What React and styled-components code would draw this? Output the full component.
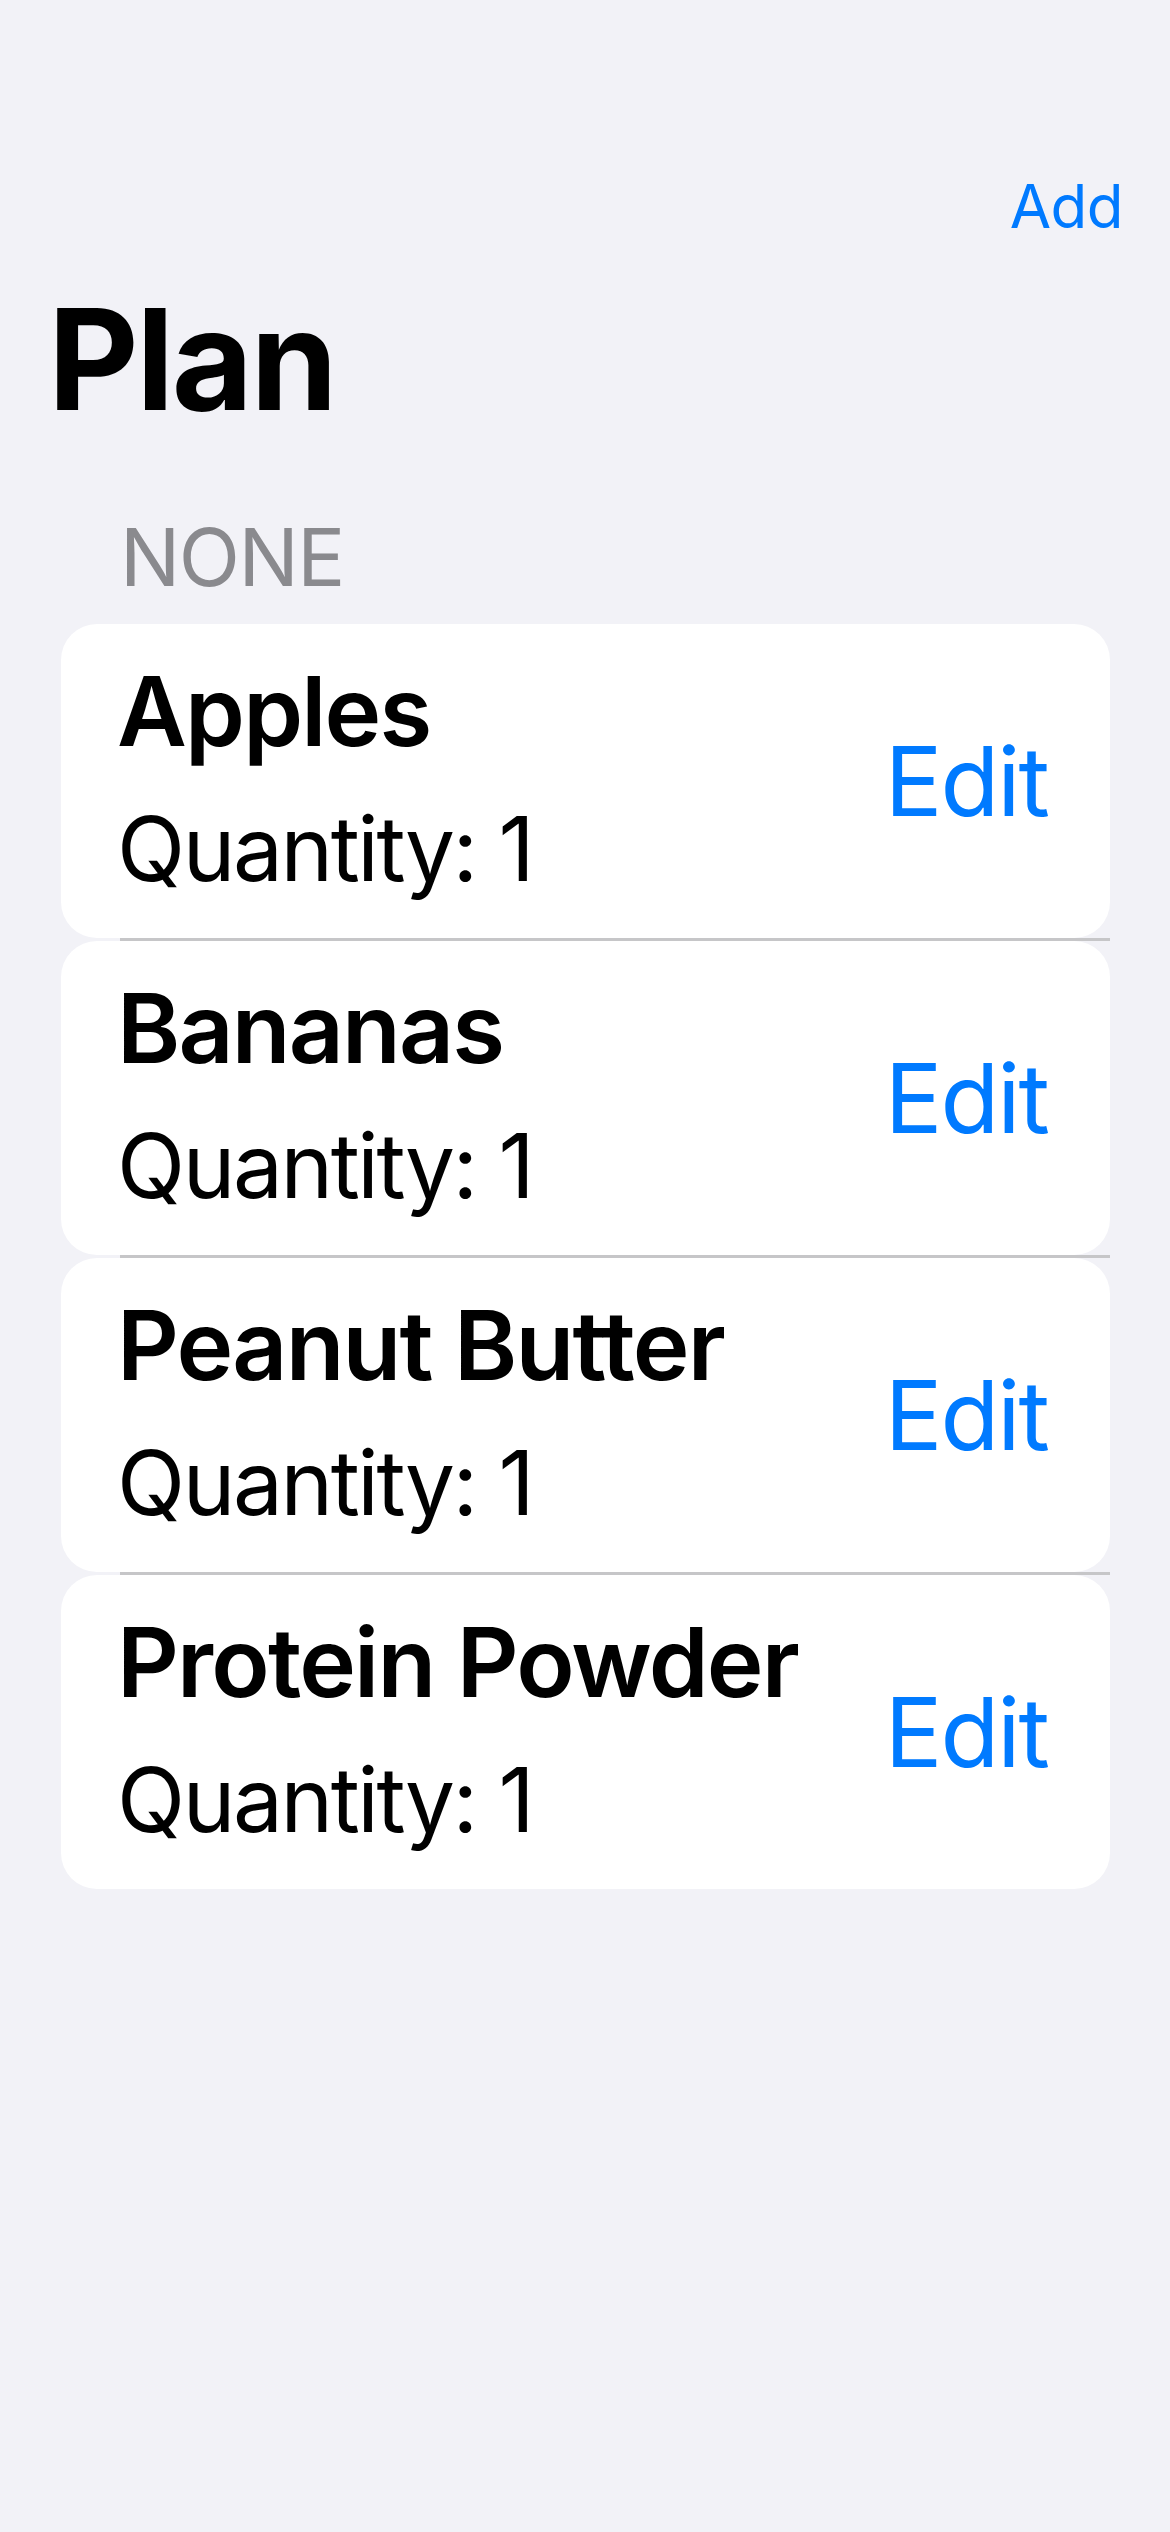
import styled, { createGlobalStyle } from "styled-components";

const GlobalStyle = createGlobalStyle`
  html, body {
    margin: 0;
    padding: 0;
    background: #f2f2f7;
  }

  body {
    font-family: Inter, "Noto Sans", "Liberation Sans", sans-serif;
    -webkit-font-smoothing: antialiased;
  }
`;

const Screen = styled.div`
  min-height: 2532px;
  width: 1170px;
  background: #f2f2f7;
  display: flex;
  flex-direction: column;
`;

const NavBar = styled.div`
  display: flex;
  justify-content: flex-end;
  padding: 176px 47px 0 0;
`;

const NavButton = styled.button`
  border: none;
  background: none;
  padding: 0;
  font-family: inherit;
  font-size: 60px;
  line-height: 60px;
  letter-spacing: -0.5px;
  color: #007aff;
  cursor: pointer;
`;

const LargeTitle = styled.h1`
  margin: 53px 0 0;
  padding-left: 48px;
  font-size: 140px;
  line-height: 140px;
  font-weight: 700;
  letter-spacing: -2.5px;
  color: #000;
`;

const SectionHeader = styled.div`
  margin-top: 88px;
  padding-left: 120px;
  font-size: 80px;
  line-height: 80px;
  letter-spacing: -1.5px;
  color: #8a8a8e;
`;

const List = styled.div`
  margin: 27px 60px 0 61px;
  display: flex;
  flex-direction: column;
`;

const Row = styled.div`
  height: 314px;
  box-sizing: border-box;
  background: #fff;
  border-radius: 36px;
  display: flex;
  align-items: center;
  justify-content: space-between;
  padding: 0 62px 0 56px;
`;

const RowText = styled.div`
  display: flex;
  flex-direction: column;
  gap: 45px;
  padding-bottom: 6px;
`;

const ItemName = styled.div`
  font-size: 96px;
  line-height: 96px;
  font-weight: 600;
  letter-spacing: -1.8px;
  color: #000;
`;

const ItemDetail = styled.div`
  font-size: 89px;
  line-height: 89px;
  letter-spacing: -2.4px;
  color: #000;
`;

const EditButton = styled(NavButton)`
  font-size: 96px;
  line-height: 96px;
  letter-spacing: -2px;
`;

const Separator = styled.div`
  height: 3px;
  margin-left: 59px;
  background: #c6c6c8;
`;

const items = [
  { name: "Apples", quantity: 1 },
  { name: "Bananas", quantity: 1 },
  { name: "Peanut Butter", quantity: 1 },
  { name: "Protein Powder", quantity: 1 },
];

export default function App() {
  return (
    <Screen>
      <GlobalStyle />
      <NavBar>
        <NavButton>Add</NavButton>
      </NavBar>
      <LargeTitle>Plan</LargeTitle>
      <SectionHeader>NONE</SectionHeader>
      <List>
        {items.map((item, i) => (
          <div key={item.name}>
            {i > 0 && <Separator />}
            <Row>
              <RowText>
                <ItemName>{item.name}</ItemName>
                <ItemDetail>Quantity: {item.quantity}</ItemDetail>
              </RowText>
              <EditButton>Edit</EditButton>
            </Row>
          </div>
        ))}
      </List>
    </Screen>
  );
}
